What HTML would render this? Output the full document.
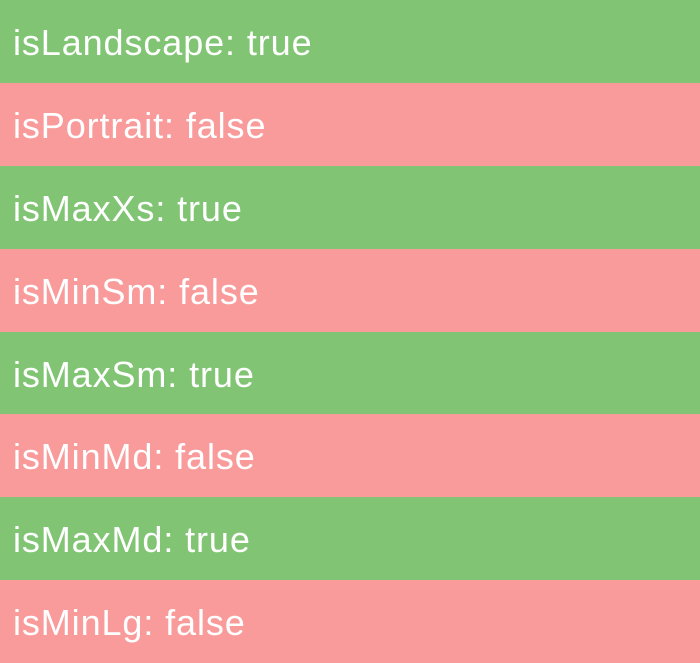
<!DOCTYPE html>
<html><head><style>
html,body{margin:0;padding:0;width:700px;height:663px;overflow:hidden;}
div{height:82.9px;box-sizing:border-box;padding-left:13px;line-height:86px;font-family:"Liberation Sans",sans-serif;font-size:36px;letter-spacing:0.9px;color:#fff;white-space:nowrap;}
.g{background:#81c574}.p{background:#f99b9b}
</style></head><body>
<div class="g">isLandscape: true</div>
<div class="p">isPortrait: false</div>
<div class="g">isMaxXs: true</div>
<div class="p">isMinSm: false</div>
<div class="g">isMaxSm: true</div>
<div class="p">isMinMd: false</div>
<div class="g">isMaxMd: true</div>
<div class="p">isMinLg: false</div>
</body></html>
